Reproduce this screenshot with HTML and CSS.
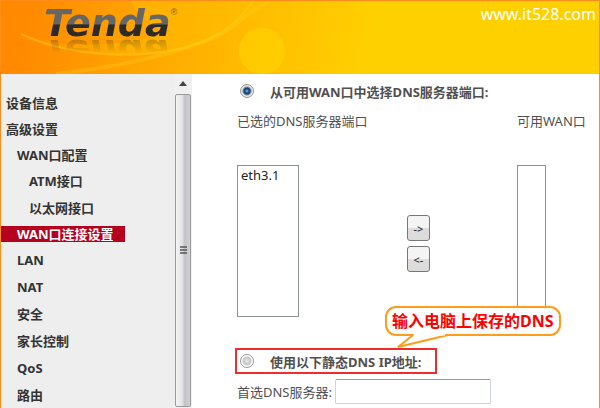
FILE: index.html
```html
<!DOCTYPE html>
<html lang="zh-CN">
<head>
  <meta charset="UTF-8">
  <meta name="viewport" content="width=device-width, initial-scale=1.0">
  <title>Tenda</title>
  <link rel="stylesheet" href="styles.css">
</head>
<body>
  <header class="top">
    <svg class="swoosh" width="340" height="73" viewBox="0 0 340 73" aria-hidden="true">
      <defs>
        <linearGradient id="glow" x1="0" y1="0" x2="1" y2="0">
          <stop offset="0" stop-color="#ffc800" stop-opacity="0"/>
          <stop offset="0.5" stop-color="#ffc800" stop-opacity="0.35"/>
          <stop offset="1" stop-color="#ffd000" stop-opacity="0.1"/>
        </linearGradient>
      </defs>
      <path d="M0 30C70 58 160 62 215 38C240 26 250 10 258 0H130C136 14 150 26 170 30C120 50 50 46 0 30Z" fill="url(#glow)"/>
      <path d="M20 33C80 60 160 60 210 37C232 26 244 12 252 0" fill="none" stroke="#ffd21e" stroke-opacity="0.4" stroke-width="2"/>
      <path d="M55 73C120 66 190 50 225 30C240 20 250 8 270 0" fill="none" stroke="#ffd21e" stroke-opacity="0.3" stroke-width="4"/>
      <circle cx="261" cy="50" r="23" fill="#ffd200" fill-opacity="0.65"/>
    </svg>
    <h1 class="logo">Tenda<sup>®</sup></h1>
    <span class="site">www.it528.com</span>
  </header>

  <div class="body">
    <nav class="menu">
      <ul>
        <li><a href="#">设备信息</a></li>
        <li><a href="#">高级设置</a>
          <ul>
            <li><a href="#">WAN口配置</a>
              <ul>
                <li><a href="#">ATM接口</a></li>
                <li><a href="#">以太网接口</a></li>
              </ul>
            </li>
            <li><a href="#" class="current">WAN口连接设置</a></li>
            <li><a href="#">LAN</a></li>
            <li><a href="#">NAT</a></li>
            <li><a href="#">安全</a></li>
            <li><a href="#">家长控制</a></li>
            <li><a href="#">QoS</a></li>
            <li><a href="#">路由</a></li>
          </ul>
        </li>
      </ul>
    </nav>
    <div class="scrollbar">
      <svg class="arrow" width="8" height="5" viewBox="0 0 8 5"><path d="M0 5L4 0L8 5Z" fill="#444"/></svg>
      <div class="thumb">
        <svg width="7" height="9" viewBox="0 0 7 9"><path d="M0 1H7M0 4H7M0 7H7" stroke="#555" stroke-width="1.5"/></svg>
      </div>
    </div>

    <main class="content">
      <form>
        <div class="choice">
          <input type="radio" name="dns" id="dnsWan" checked>
          <label for="dnsWan">从可用WAN口中选择DNS服务器端口:</label>
        </div>
        <div class="ports">
          <label for="selected">已选的DNS服务器端口</label>
          <label for="available" class="right">可用WAN口</label>
          <select id="selected" class="list" size="8">
            <option>eth3.1</option>
          </select>
          <div class="move">
            <button type="button">-&gt;</button>
            <button type="button">&lt;-</button>
          </div>
          <select id="available" class="list narrow" size="8"></select>
        </div>
        <div class="choice marked">
          <input type="radio" name="dns" id="dnsStatic">
          <label for="dnsStatic">使用以下静态DNS IP地址:</label>
          <div class="callout">
            输入电脑上保存的DNS
            <svg width="54" height="15" viewBox="0 0 54 15"><path d="M16 1L1 13L51 1" fill="#fff" stroke="#ff9c1a" stroke-width="2"/><path d="M17 0H48" stroke="#fff" stroke-width="3"/></svg>
          </div>
        </div>
        <div class="field">
          <label for="primary">首选DNS服务器:</label>
          <input type="text" id="primary">
        </div>
      </form>
    </main>
  </div>
</body>
</html>
```
FILE: styles.css
```css
* {
  box-sizing: border-box;
}
body {
  margin: 0;
  height: 100vh;
  display: flex;
  flex-direction: column;
  overflow: hidden;
  border: 1px solid #ff8c1a;
  border-bottom: none;
  font-family: "Noto Sans", "Noto Sans CJK SC", sans-serif;
  font-size: 13px;
  color: #505050;
  background: #fff;
}

/* header */
.top {
  position: relative;
  flex: none;
  height: 73px;
  display: flex;
  align-items: flex-start;
  justify-content: space-between;
  padding: 0 3px 0 43px;
  background: linear-gradient(100deg, #ff8a00 30px, #ffa000 120px, #ffbe00 260px, #ffd000 370px);
}
.swoosh {
  position: absolute;
  top: 0;
  left: 0;
}
.logo {
  position: relative;
  margin: 0;
  font: italic bold 38px/44px "DejaVu Sans", sans-serif;
  color: transparent;
  background-image: linear-gradient(#666 23px, #2d2a28 24px);
  -webkit-background-clip: text;
  background-clip: text;
  -webkit-box-reflect: below -14px linear-gradient(transparent 50%, rgba(0, 0, 0, 0.3) 85%);
}
.logo sup {
  position: absolute;
  top: 4px;
  left: 100%;
  font: 9px/14px "Liberation Sans", sans-serif;
  color: #7a5a10;
}
.site {
  position: relative;
  font-size: 16px;
  line-height: 26px;
  color: #fff;
}

/* left menu */
.body {
  flex: 1;
  display: flex;
  min-height: 0;
}
.menu {
  width: 173px;
  padding-top: 16px;
  background: #eee;
  font-weight: bold;
  line-height: 26px;
}
.menu ul {
  list-style: none;
  margin: 0;
  padding: 0;
}
.menu a {
  display: block;
  width: fit-content;
  padding-left: 5px;
  color: #333;
  text-decoration: none;
}
.menu ul ul a {
  padding-left: 16px;
}
.menu ul ul ul a {
  padding-left: 28px;
}
.menu ul ul li + li {
  margin-top: 1px;
}
.menu ul ul .current {
  margin: 5px 0;
  padding-right: 11px;
  line-height: 16px;
  color: #fff;
  background: #b5001f;
}

.scrollbar {
  width: 18px;
  display: flex;
  flex-direction: column;
  align-items: center;
  padding-bottom: 1px;
  background: #f0f0f0;
}
.arrow {
  margin: 7px 0 8px;
}
.thumb {
  flex: 1;
  width: 16px;
  display: flex;
  align-items: center;
  justify-content: center;
  border: 1px solid #999;
  border-radius: 2px;
  background: linear-gradient(to right, #f5f5f5, #e2e2e4 45%, #c4c4c8 60%, #d0d0d4);
}

/* DNS settings */
.content {
  flex: 1;
  padding: 7px 0 0 45px;
}
.choice {
  display: flex;
  align-items: center;
  gap: 16px;
  height: 20px;
  padding-left: 3px;
  font-weight: bold;
}
.choice input {
  appearance: none;
  width: 14px;
  height: 14px;
  margin: 0;
  border: 1px solid #999;
  border-radius: 50%;
  background: radial-gradient(circle, #e8e8e8 0, #c4c4c4 4px, #fff 5px);
}
.choice input:checked {
  background: radial-gradient(circle, #6fc4ee 0, #1d4c85 2px, #1d3f70 3px, #e4e4e4 5px);
}
.ports {
  display: grid;
  grid-template-columns: 170px 110px 1fr;
  align-items: start;
  padding-top: 10px;
  line-height: 20px;
  row-gap: 34px;
}
.ports .right {
  grid-column: 3;
}
.list {
  width: 62px;
  height: 152px;
  padding: 0;
  border: 1px solid #8a9296;
  border-radius: 0;
  background: #fff;
  overflow: hidden;
  outline: none;
  font: 13px "Noto Sans", sans-serif;
  color: #222;
}
.list option {
  padding: 0 3px;
  min-height: 0;
  line-height: 16px;
}
.narrow {
  width: 29px;
}
.move {
  display: grid;
  gap: 5px;
  padding-top: 50px;
  justify-items: start;
}
.move button {
  width: 23px;
  height: 26px;
  padding: 0;
  border: 1px solid #777;
  border-radius: 3px;
  background: linear-gradient(#f4f4f4 50%, #dcdcdc 50%);
  font: 11px "Noto Sans", sans-serif;
  color: #222;
}
.marked {
  position: relative;
  width: 202px;
  height: 26px;
  margin: 31px 0 5px -2px;
  border: 2px solid #f22b2b;
}
.callout {
  position: absolute;
  left: 148px;
  bottom: 36px;
  padding: 0 5px;
  border: 2px solid #ff9c1a;
  border-radius: 11px;
  background: #fff;
  font-size: 16px;
  line-height: 26px;
  white-space: nowrap;
  color: #f00;
}
.callout svg {
  position: absolute;
  top: 26px;
  left: 10px;
}
.field {
  display: flex;
  align-items: center;
}
.field input {
  width: 156px;
  height: 25px;
  margin-left: 3px;
  border: 1px solid #c9d6dc;
  border-top-color: #999;
  border-radius: 2px;
}
```
